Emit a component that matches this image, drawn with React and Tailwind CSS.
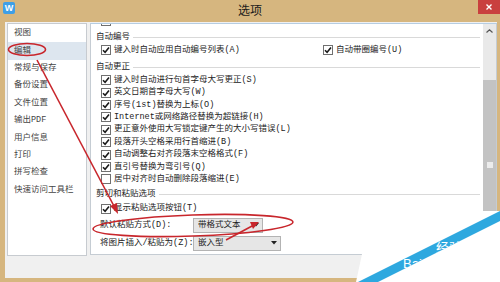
import React from "react";

const FONT = "font-['Liberation_Mono','Noto_Sans_CJK_SC',monospace]";

function Check({ checked = true }) {
  return (
    <span className="w-[10px] h-[10px] shrink-0 border border-[#707070] bg-white flex items-center justify-center">
      {checked && (
        <svg width="8" height="8" viewBox="0 0 8 8">
          <path d="M1 4.2 L3.1 6.3 L7 1.6" fill="none" stroke="#1a1a1a" strokeWidth="1.6" />
        </svg>
      )}
    </span>
  );
}

function Row({ children, checked = true }) {
  return (
    <div className="h-[12.4px] flex items-center pl-[10px] shrink-0">
      <Check checked={checked} />
      <span className="ml-[3px] whitespace-nowrap">{children}</span>
    </div>
  );
}

function Heading({ children, className = "" }) {
  return (
    <div className={"h-[14px] flex items-center pl-[5px] pr-[3px] shrink-0 " + className}>
      <span className="whitespace-nowrap">{children}</span>
      <span className="flex-1 h-px bg-[#d9d9d9] ml-[3px]" />
    </div>
  );
}

function Select({ value, w }) {
  return (
    <div
      className={
        "h-[15px] flex items-center justify-between border border-[#b3b3b3] bg-[#e6e6e6] pl-[4px] pr-[3px] " + w
      }
    >
      <span className="whitespace-nowrap">{value}</span>
      <svg width="6" height="4" viewBox="0 0 6 4">
        <path d="M0 0 H6 L3 3.5 Z" fill="#222" />
      </svg>
    </div>
  );
}

const nav = ["视图", "编辑", "常规与保存", "备份设置", "文件位置", "输出PDF", "用户信息", "打印", "拼写检查", "快速访问工具栏"];

export default function App() {
  return (
    <div className={"relative w-[500px] h-[282px] overflow-hidden bg-[#d6b67f] text-[#222] text-[8.5px] " + FONT}>
      {/* title bar */}
      <div className="h-[22px] grid grid-cols-[1fr_auto_1fr] items-start">
        <div className="flex pl-[3px] pt-[2px]">
          <div className="w-[12px] h-[12px] rounded-[2px] bg-[#3e9fe6] flex items-center justify-center text-white text-[9px] font-bold font-['Liberation_Sans',sans-serif] leading-none">
            W
          </div>
        </div>
        <div className="pt-[3px] text-[12px] leading-[14px] text-[#1a1a1a] font-['Noto_Sans_CJK_SC',sans-serif]">选项</div>
        <div className="flex justify-end">
          <div className="w-[22px] h-[14px] bg-[#c9403e] flex items-center justify-center">
            <svg width="6" height="6" viewBox="0 0 6 6">
              <path d="M0.5 0.5 L5.5 5.5 M5.5 0.5 L0.5 5.5" stroke="#fff" strokeWidth="1.4" />
            </svg>
          </div>
        </div>
      </div>

      {/* body */}
      <div className="ml-[5px] mr-[3px] h-[256px] bg-[#f0f0f0] flex items-start pt-[1px] pl-[2px] gap-[3px]">
        {/* left nav */}
        <div className="w-[80px] h-[233px] bg-white border border-[#c7cbd0] pt-[1px] flex flex-col">
          {nav.map((n) => (
            <div
              key={n}
              className={
                "h-[17.4px] flex items-center pl-[6px] whitespace-nowrap text-[#444] " +
                (n === "编辑" ? "bg-[#dde6ef]" : "")
              }
            >
              {n}
            </div>
          ))}
        </div>

        {/* right panel */}
        <div className="flex-1 h-[232px] bg-white border border-[#c5ccd3] border-t-[#b6cde2] flex">
          <div className="flex-1 overflow-hidden flex flex-col">
            <div className="mt-[-9px] h-[12px] flex items-center pl-[10px] shrink-0">
              <Check checked={false} />
            </div>
            <Heading className="mt-[3px]">自动编号</Heading>
            <div className="h-[12px] flex items-center pl-[10px] shrink-0">
              <div className="w-[222px] flex items-center">
                <Check />
                <span className="ml-[3px] whitespace-nowrap">键入时自动应用自动编号列表(A)</span>
              </div>
              <Check />
              <span className="ml-[3px] whitespace-nowrap">自动带圈编号(U)</span>
            </div>
            <Heading className="mt-[4px]">自动更正</Heading>
            <Row>键入时自动进行句首字母大写更正(S)</Row>
            <Row>英文日期首字母大写(W)</Row>
            <Row>序号(1st)替换为上标(O)</Row>
            <Row>Internet或网络路径替换为超链接(H)</Row>
            <Row>更正意外使用大写锁定键产生的大小写错误(L)</Row>
            <Row>段落开头空格采用行首缩进(B)</Row>
            <Row>自动调整右对齐段落末空格格式(F)</Row>
            <Row>直引号替换为弯引号(Q)</Row>
            <Row checked={false}>居中对齐时自动删除段落缩进(E)</Row>
            <Heading className="mt-[2px]">剪切和粘贴选项</Heading>
            <div className="h-[14px] flex items-center pl-[10px] shrink-0">
              <Check />
              <span className="ml-[3px] whitespace-nowrap">显示粘贴选项按钮(T)</span>
            </div>
            <div className="mt-[2px] flex items-center pl-[9px] shrink-0">
              <span className="w-[93px] whitespace-nowrap">默认粘贴方式(D):</span>
              <Select value="带格式文本" w="w-[70px]" />
            </div>
            <div className="mt-[3px] flex items-center pl-[9px] shrink-0">
              <span className="w-[93px] whitespace-nowrap">将图片插入/粘贴为(Z):</span>
              <Select value="嵌入型" w="w-[88px]" />
            </div>
          </div>

          {/* scrollbar */}
          <div className="w-[13px] bg-[#e9e9e9] flex flex-col">
            <div className="h-[14px] flex items-center justify-center">
              <svg width="7" height="4" viewBox="0 0 7 4">
                <path d="M0.5 3.5 L3.5 0.8 L6.5 3.5" fill="none" stroke="#555" strokeWidth="1.2" />
              </svg>
            </div>
            <div className="h-[42px]" />
            <div className="h-[170px] bg-[#c3c3c3] flex items-center justify-center">
              <div className="w-[6px] h-[6px] bg-[#ececec]" />
            </div>
          </div>
        </div>
      </div>

      {/* annotations & watermark overlay */}
      <svg className="absolute left-0 top-0 pointer-events-none" width="500" height="282" viewBox="0 0 500 282">
        <defs>
          <clipPath id="stripe">
            <polygon points="358,282 500,211 500,221 378,282" />
          </clipPath>
        </defs>
        <polygon points="356,282 362,254 483,254 483,211 500,211 500,282" fill="#fff" />
        <polygon points="358,282 500,211 500,221 378,282" fill="#2ea8df" />
        <g clipPath="url(#stripe)" fill="#fff" fontFamily="Liberation Sans, sans-serif" fontSize="13">
          <text x="403" y="268">Bai</text>
          <text x="436" y="252" fontFamily="Noto Sans CJK SC, sans-serif">经验</text>
        </g>

        <g fill="none" stroke="#c8262c" strokeWidth="1.6">
          <ellipse cx="27" cy="49.5" rx="18.5" ry="6" />
          <ellipse cx="193" cy="225.5" rx="100" ry="10.5" transform="rotate(-2 193 225.5)" />
          <line x1="37" y1="60" x2="115" y2="208" />
          <line x1="226" y1="240" x2="253" y2="225.5" />
        </g>
        <polygon points="118,214 110,206 117,203" fill="#c8262c" />
        <polygon points="259,222 250,222 253,229" fill="#c8262c" />
      </svg>
    </div>
  );
}
